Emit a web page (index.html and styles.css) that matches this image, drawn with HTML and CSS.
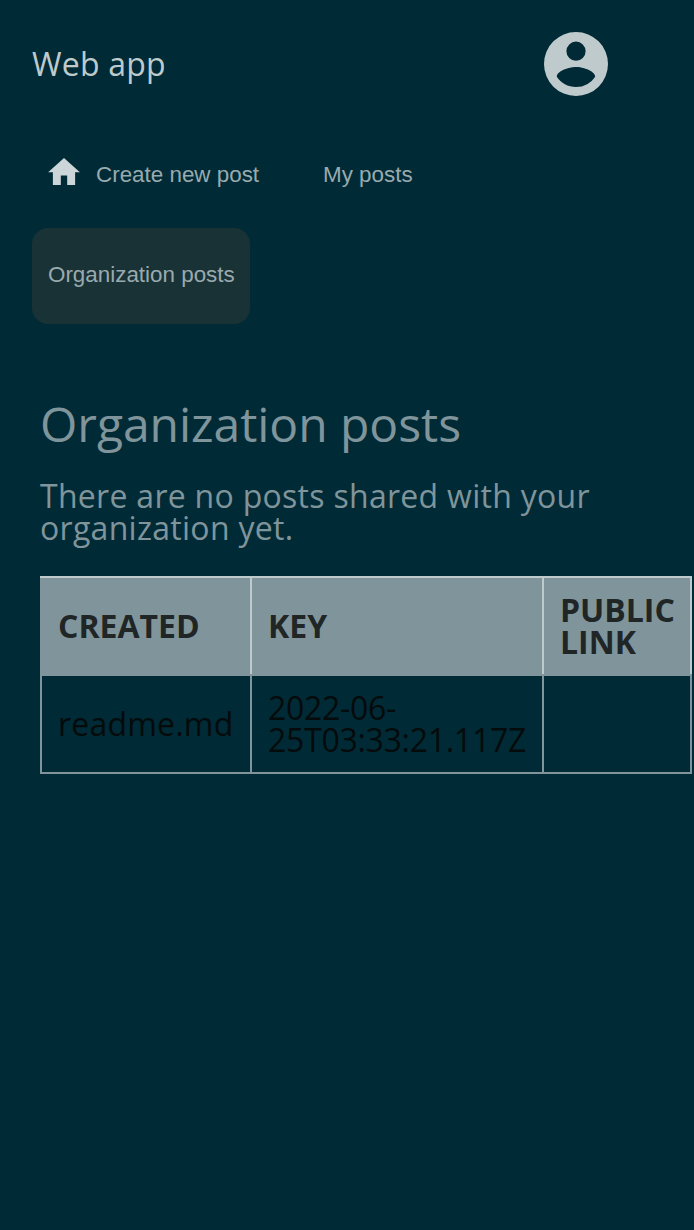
FILE: index.html
```html
<!DOCTYPE html>
<html lang="en">
<head>
<meta charset="utf-8">
<title>Web app</title>
<link rel="stylesheet" href="styles.css">
</head>
<body>
<header class="toolbar">
  <span class="brand">Web app</span>
  <svg class="account" viewBox="0 0 24 24"><path d="M12 0a12 12 0 1 0 0 24 12 12 0 0 0 0-24zm0 3.6a3.6 3.6 0 1 1 0 7.2 3.6 3.6 0 0 1 0-7.2zm0 17.04c-3 0-5.65-1.54-7.2-3.86.04-2.39 4.8-3.7 7.2-3.7s7.16 1.31 7.2 3.7A8.64 8.64 0 0 1 12 20.64z"/></svg>
</header>
<nav class="nav">
  <a class="tab"><svg class="home" viewBox="2 3 20 17"><path d="M10 20v-6h4v6h5v-8h3L12 3 2 12h3v8z"/></svg>Create new post</a>
  <a class="tab">My posts</a>
  <a class="tab active">Organization posts</a>
</nav>
<main class="content">
  <h1 class="title">Organization posts</h1>
  <p class="message">There are no posts shared with your organization yet.</p>
  <table class="posts">
    <colgroup><col class="created"><col class="key"><col class="link"></colgroup>
    <thead><tr><th>CREATED</th><th>KEY</th><th>PUBLIC LINK</th></tr></thead>
    <tbody><tr><td>readme.md</td><td class="timestamp">2022-06-25T03:33:21.117Z</td><td></td></tr></tbody>
  </table>
</main>
</body>
</html>
```
FILE: styles.css
```css
body { margin: 0; min-height: 1230px; background: #002b36; font-family: "Open Sans", sans-serif; font-size: 32px; overflow: hidden; }
.toolbar { display: flex; align-items: center; justify-content: space-between; height: 128px; padding: 0 86px 0 32px; box-sizing: border-box; }
.brand { padding-bottom: 2px; color: #bfcacc; letter-spacing: 0.2px; }
.account { width: 64px; height: 64px; fill: #bfcacc; }
.nav { display: flex; flex-wrap: wrap; column-gap: 32px; row-gap: 4px; padding: 0 32px; width: 500px; }
.tab { display: flex; align-items: center; height: 96px; padding: 0 16px 2px; box-sizing: border-box; border-radius: 16px; color: #99aaaf; font: 22.4px "Liberation Sans", sans-serif; white-space: nowrap; }
.active { width: 218px; background: #193235; }
.home { width: 32px; height: 27px; margin: -7px 16px 0 0; fill: #ccd5d7; }
.content { padding: 76px 0 0 40px; }
.title { margin: 0; color: #80959b; font-size: 48px; font-weight: 400; line-height: 48px; letter-spacing: -0.03px; }
.message { width: 600px; margin: 32px 0; color: #80959b; line-height: 32px; letter-spacing: 0.29px; }
.posts { width: 652px; table-layout: fixed; border-collapse: collapse; line-height: 32px; }
.created { width: 210px; }
.key { width: 292px; }
.link { width: 148px; }
.posts th, .posts td { padding: 16px; border: 2px solid #80959b; text-align: left; }
.posts th { border-color: #bfcacc #bfcacc #80959b; background: #80959b; color: #202526; }
.posts th:first-child { border-left-color: #80959b; }
.posts td { color: #050a0b; letter-spacing: 0.2px; }
.posts .timestamp { letter-spacing: -0.28px; }
```
